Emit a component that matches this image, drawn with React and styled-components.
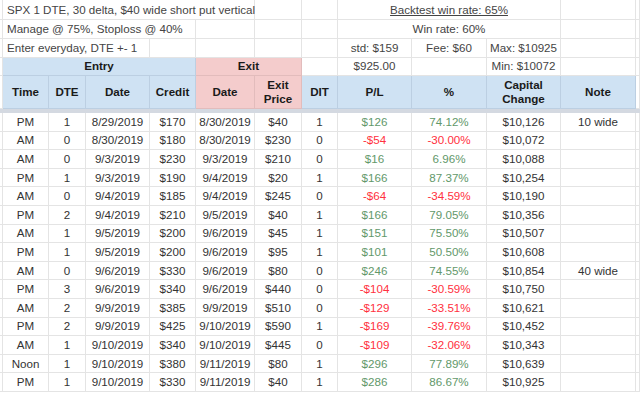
import styled, { createGlobalStyle, css } from "styled-components";

const GlobalStyle = createGlobalStyle`
  html, body {
    margin: 0;
    padding: 0;
    background: #fff;
  }
  body {
    font-family: "Liberation Sans", Arial, sans-serif;
    overflow: hidden;
  }
`;

const COLS = "3px 46px 37px 64px 46px 59px 47px 36px 74px 75px 74px 75px 1fr";

const rows = [
  ["PM", "1", "8/29/2019", "$170", "8/30/2019", "$40", "1", "$126", "74.12%", "$10,126", "10 wide"],
  ["AM", "0", "8/30/2019", "$180", "8/30/2019", "$230", "0", "-$54", "-30.00%", "$10,072", ""],
  ["AM", "0", "9/3/2019", "$230", "9/3/2019", "$210", "0", "$16", "6.96%", "$10,088", ""],
  ["PM", "1", "9/3/2019", "$190", "9/4/2019", "$20", "1", "$166", "87.37%", "$10,254", ""],
  ["AM", "0", "9/4/2019", "$185", "9/4/2019", "$245", "0", "-$64", "-34.59%", "$10,190", ""],
  ["PM", "2", "9/4/2019", "$210", "9/5/2019", "$40", "1", "$166", "79.05%", "$10,356", ""],
  ["AM", "1", "9/5/2019", "$200", "9/6/2019", "$45", "1", "$151", "75.50%", "$10,507", ""],
  ["PM", "1", "9/5/2019", "$200", "9/6/2019", "$95", "1", "$101", "50.50%", "$10,608", ""],
  ["AM", "0", "9/6/2019", "$330", "9/6/2019", "$80", "0", "$246", "74.55%", "$10,854", "40 wide"],
  ["PM", "3", "9/6/2019", "$340", "9/6/2019", "$440", "0", "-$104", "-30.59%", "$10,750", ""],
  ["AM", "2", "9/9/2019", "$385", "9/9/2019", "$510", "0", "-$129", "-33.51%", "$10,621", ""],
  ["PM", "2", "9/9/2019", "$425", "9/10/2019", "$590", "1", "-$169", "-39.76%", "$10,452", ""],
  ["AM", "1", "9/10/2019", "$340", "9/10/2019", "$445", "0", "-$109", "-32.06%", "$10,343", ""],
  ["Noon", "1", "9/10/2019", "$380", "9/11/2019", "$80", "1", "$296", "77.89%", "$10,639", ""],
  ["PM", "1", "9/10/2019", "$330", "9/11/2019", "$40", "1", "$286", "86.67%", "$10,925", ""],
];

const headers = [
  { label: "Time", tone: "blue" },
  { label: "DTE", tone: "blue" },
  { label: "Date", tone: "blue" },
  { label: "Credit", tone: "blue" },
  { label: "Date", tone: "pink" },
  { label: ["Exit", "Price"], tone: "pink" },
  { label: "DIT", tone: "blue" },
  { label: "P/L", tone: "blue" },
  { label: "%", tone: "blue" },
  { label: ["Capital", "Change"], tone: "blue" },
  { label: "Note", tone: "blue" },
];

const tones = {
  blue: { bg: "#cfe2f3", line: "#bccfe2" },
  pink: { bg: "#f4cccc", line: "#e2bcbc" },
  white: { bg: "#ffffff", line: "#e4e4e4" },
};

const Sheet = styled.div`
  width: 640px;
  height: 394px;
  display: flex;
  flex-direction: column;
  overflow: hidden;
`;

const Row = styled.div`
  display: grid;
  grid-template-columns: ${COLS};
  height: ${(p) => p.$h}px;
  flex: none;
`;

const Cell = styled.div`
  box-sizing: border-box;
  grid-column: span ${(p) => p.$span || 1};
  display: flex;
  align-items: center;
  justify-content: ${(p) => (p.$left ? "flex-start" : "center")};
  padding: 0 4px;
  font-size: 11.6px;
  line-height: 14px;
  color: ${(p) => p.$color || (p.$bold ? "#1a1a1a" : "#333")};
  font-weight: ${(p) => (p.$bold ? 700 : 400)};
  text-align: center;
  white-space: nowrap;
  background: ${(p) => tones[p.$tone || "white"].bg};
  border-right: 1px solid ${(p) => tones[p.$tone || "white"].line};
  border-bottom: 1px solid ${(p) => tones[p.$tone || "white"].line};
  ${(p) =>
    p.$underline &&
    css`
      text-decoration: underline;
    `}
`;

const Edge = styled.div`
  box-sizing: border-box;
  border-right: 1px solid #e4e4e4;
  border-bottom: 1px solid #e4e4e4;
`;

const Stack = styled.span`
  display: flex;
  flex-direction: column;
  align-items: center;
`;

const Divider = styled.div`
  height: 4px;
  flex: none;
  background: #d4d9e1;
`;

const Note = styled.span`
  color: #444;
`;

const plColor = (v) => (v.startsWith("-") ? "#ff3040" : "#62986a");

function TopRows() {
  return (
    <>
      <Row $h={20}>
        <Edge />
        <Cell $span={5} $left>
          <Note>SPX 1 DTE, 30 delta, $40 wide short put vertical</Note>
        </Cell>
        <Cell />
        <Cell />
        <Cell $span={3} $underline $color="#444">
          Backtest win rate: 65%
        </Cell>
        <Cell />
        <Edge />
      </Row>
      <Row $h={18.5}>
        <Edge />
        <Cell $span={4} $left>
          <Note>Manage @ 75%, Stoploss @ 40%</Note>
        </Cell>
        <Cell />
        <Cell />
        <Cell />
        <Cell $span={3} $color="#444">
          Win rate: 60%
        </Cell>
        <Cell />
        <Edge />
      </Row>
      <Row $h={19}>
        <Edge />
        <Cell $span={3} $left>
          <Note>Enter everyday, DTE +- 1</Note>
        </Cell>
        <Cell />
        <Cell />
        <Cell />
        <Cell />
        <Cell $color="#444">std: $159</Cell>
        <Cell $color="#444">Fee: $60</Cell>
        <Cell $color="#444">Max: $10925</Cell>
        <Cell />
        <Edge />
      </Row>
      <Row $h={18.5}>
        <Edge />
        <Cell $span={4} $tone="blue" $bold>
          Entry
        </Cell>
        <Cell $span={2} $tone="pink" $bold>
          Exit
        </Cell>
        <Cell />
        <Cell $color="#444">$925.00</Cell>
        <Cell />
        <Cell $color="#444">Min: $10072</Cell>
        <Cell />
        <Edge />
      </Row>
    </>
  );
}

export default function App() {
  return (
    <Sheet>
      <GlobalStyle />
      <TopRows />
      <Row $h={33}>
        <Edge />
        {headers.map((h, i) => (
          <Cell key={i} $tone={h.tone} $bold>
            {Array.isArray(h.label) ? (
              <Stack>
                {h.label.map((l) => (
                  <span key={l}>{l}</span>
                ))}
              </Stack>
            ) : (
              h.label
            )}
          </Cell>
        ))}
        <Edge />
      </Row>
      <Divider />
      {rows.map((r, i) => (
        <Row key={i} $h={18.6}>
          <Edge />
          {r.map((v, j) => (
            <Cell key={j} $color={j === 7 || j === 8 ? plColor(v) : undefined}>
              {v}
            </Cell>
          ))}
          <Edge />
        </Row>
      ))}
    </Sheet>
  );
}
